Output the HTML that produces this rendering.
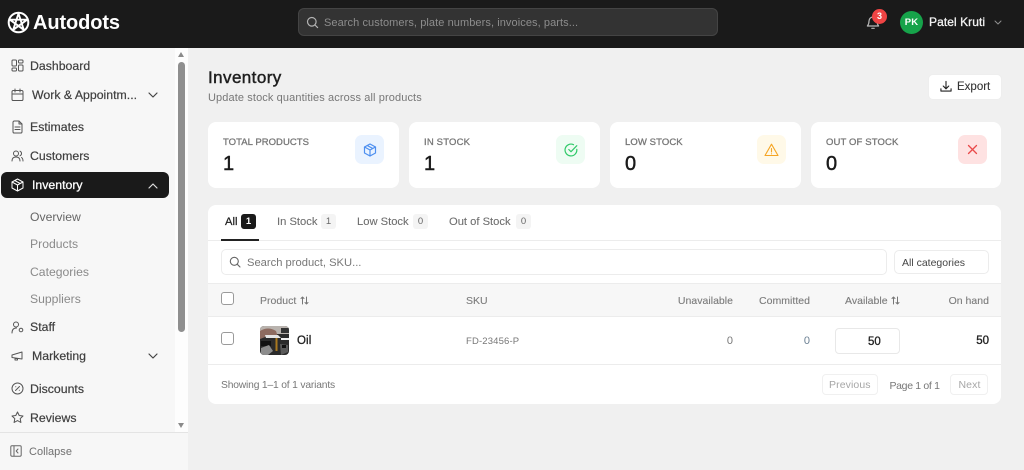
<!DOCTYPE html>
<html><head><meta charset="utf-8"><style>
*{box-sizing:border-box}
html,body{margin:0;padding:0;width:1024px;height:469px;overflow:hidden;background:#f0f0f0;font-family:"Liberation Sans",sans-serif}
.a{position:absolute}
.t{position:absolute;white-space:nowrap;line-height:16px;height:16px}
svg.i{position:absolute;fill:none;stroke:currentColor;stroke-linecap:round;stroke-linejoin:round}
.nav{font-size:12.3px;color:#3f3f3f;letter-spacing:0;-webkit-text-stroke:.2px #3f3f3f}
.sub{font-size:12.2px;color:#8a8a8a;letter-spacing:0}
.card{position:absolute;background:#fff;border-radius:8px;top:122px;height:66px}
.lbl{font-size:9.5px;color:#777;letter-spacing:.12px;font-weight:400;-webkit-text-stroke:.3px #777}
.num{font-size:20px;color:#1a1a1a;-webkit-text-stroke:.45px #1a1a1a;line-height:22px;height:22px}
.ib{position:absolute;width:29px;height:29px;border-radius:7px;top:135px}
.th{font-size:10.5px;color:#7c7c7c;letter-spacing:.02px;-webkit-text-stroke:.12px #7c7c7c}
.tab{font-size:11.2px;color:#6f6f6f;letter-spacing:0;-webkit-text-stroke:.1px #6f6f6f}
.bd{position:absolute;height:15px;width:15px;border-radius:3px;background:#f4f4f4;color:#666;font-size:9.5px;text-align:center;line-height:15px;top:214px}
</style></head><body>

<!-- header -->
<div class="a" style="left:0;top:0;width:1024px;height:47.5px;background:#1a1a1a"></div>
<svg class="i" style="left:7px;top:11px;color:#fff" width="23" height="23" viewBox="0 0 23 23" stroke-width="2"><circle cx="11.5" cy="11.5" r="9.8"/><path d="M11.500 2.500L16.800 18.800L2.900 8.700H20.100L6.200 18.800Z" stroke-width="1.900"/></svg>
<div class="t" style="left:33px;top:11px;font-size:20px;line-height:24px;height:24px;color:#fff;font-weight:700;letter-spacing:-.1px">Autodots</div>

<div class="a" style="left:298px;top:8px;width:420px;height:28px;background:#333;border:1px solid #444;border-radius:6px"></div>
<svg class="i" style="left:306px;top:16px;color:#b4b4b4" width="13" height="13" viewBox="0 0 13 13" stroke-width="1.2"><circle cx="5.8" cy="5.8" r="4.3"/><path d="M9 9L11.6 11.6"/></svg>
<div class="t" style="left:324px;top:15px;font-size:11px;color:#8d8d8d;letter-spacing:.08px">Search customers, plate numbers, invoices, parts...</div>

<svg class="i" style="left:866px;top:15px;color:#b8b8b8" width="14" height="15" viewBox="0 0 14 15" stroke-width="1.2"><path d="M3 6a4 4 0 0 1 8 0c0 3.5 1.4 4.5 1.6 5H1.4C1.6 10.5 3 9.500 3 6Z"/><path d="M5.800 13.300h2.400"/></svg>
<div class="a" style="left:872px;top:9px;width:15px;height:15px;border-radius:50%;background:#ef4444;color:#fff;font-size:9px;font-weight:700;text-align:center;line-height:15px">3</div>
<div class="a" style="left:900px;top:11px;width:23px;height:23px;border-radius:50%;background:#16a34a;color:#fff;font-size:9.5px;font-weight:700;text-align:center;line-height:23px;letter-spacing:.2px">PK</div>
<div class="t" style="left:929px;top:14px;font-size:12px;color:#f3f3f3;font-weight:400;-webkit-text-stroke:.3px #f3f3f3;letter-spacing:.07px">Patel Kruti</div>
<svg class="i" style="left:993.500px;top:19.500px;color:#8f8f8f" width="8" height="5" viewBox="0 0 8 5" stroke-width="1"><path d="M1 1l3 3 3-3"/></svg>

<!-- sidebar -->
<div class="a" style="left:0;top:47.500px;width:188px;height:422px;background:#f7f7f7"></div>
<div class="a" style="left:175px;top:47.500px;width:13px;height:385px;background:#fdfdfd"></div>
<div class="a" style="left:178px;top:62px;width:7px;height:270px;border-radius:3.500px;background:#8f8f8f"></div>
<div class="a" style="left:178px;top:52px;width:0;height:0;border-left:3.500px solid transparent;border-right:3.500px solid transparent;border-bottom:5px solid #8a8a8a"></div>
<div class="a" style="left:178px;top:422.500px;width:0;height:0;border-left:3.500px solid transparent;border-right:3.500px solid transparent;border-top:5px solid #8a8a8a"></div>
<div class="a" style="left:0;top:432px;width:188px;height:1px;background:#e4e4e4"></div>

<svg class="i" style="left:11px;top:59px;color:#555" width="13" height="13" viewBox="0 0 13 13" stroke-width="1"><rect x="1" y="1" width="4.500" height="6" rx="1"/><rect x="7.500" y="1" width="4.500" height="3" rx="1"/><rect x="7.500" y="6" width="4.500" height="6" rx="1"/><rect x="1" y="9" width="4.500" height="3" rx="1"/></svg>
<div class="t nav" style="left:30px;top:58px">Dashboard</div>

<svg class="i" style="left:11px;top:88px;color:#555" width="13" height="14" viewBox="0 0 13 14" stroke-width="1"><rect x="1" y="2.500" width="11" height="10" rx="1.300"/><path d="M1 6h11M4 1v3M9 1v3"/></svg>
<div class="t nav" style="left:32px;top:87px">Work &amp; Appointm...</div>
<svg class="i" style="left:148px;top:92px;color:#444" width="10" height="6" viewBox="0 0 10 6" stroke-width="1.200"><path d="M1 1l4 4 4-4"/></svg>

<svg class="i" style="left:12px;top:120px;color:#555" width="11" height="14" viewBox="0 0 11 14" stroke-width="1"><path d="M7 1H2.300A1.300 1.300 0 0 0 1 2.300v9.400A1.300 1.300 0 0 0 2.300 13h6.400A1.300 1.300 0 0 0 10 11.700V4Z"/><path d="M7 1v3h3M3 7h5M3 9.500h5"/></svg>
<div class="t nav" style="left:30px;top:119px">Estimates</div>

<svg class="i" style="left:11px;top:150px;color:#555" width="13" height="12" viewBox="0 0 13 12" stroke-width="1"><circle cx="5" cy="3.500" r="2.500"/><path d="M1 11c0-3 1.500-4 4-4s4 1 4 4M9 1.200a2.500 2.500 0 0 1 0 4.600M10.500 7.500c1 .6 1.500 1.700 1.500 3.500"/></svg>
<div class="t nav" style="left:30px;top:148px">Customers</div>

<div class="a" style="left:1px;top:172px;width:168px;height:26px;background:#1a1a1a;border-radius:6px"></div>
<svg class="i" style="left:11px;top:178px;color:#fff" width="13" height="14" viewBox="0 0 13 14" stroke-width="1"><path d="M6.500 1L12 4v6l-5.500 3L1 10V4Z"/><path d="M1 4l5.500 3L12 4M6.500 7v6M3.700 2.500l5.500 3"/></svg>
<div class="t nav" style="left:32px;top:177px;color:#fff;-webkit-text-stroke:.3px #fff">Inventory</div>
<svg class="i" style="left:148px;top:183px;color:#ddd" width="10" height="6" viewBox="0 0 10 6" stroke-width="1.200"><path d="M1 5l4-4 4 4"/></svg>

<div class="t sub" style="left:30px;top:209px;color:#666">Overview</div>
<div class="t sub" style="left:30px;top:236px">Products</div>
<div class="t sub" style="left:30px;top:264px">Categories</div>
<div class="t sub" style="left:30px;top:291px">Suppliers</div>

<svg class="i" style="left:11px;top:321px;color:#555" width="13" height="13" viewBox="0 0 13 13" stroke-width="1"><circle cx="5" cy="3.500" r="2.500"/><path d="M1 12c0-3 1.500-5 4.500-5"/><circle cx="10" cy="9" r="1.800"/></svg>
<div class="t nav" style="left:30px;top:319px">Staff</div>

<svg class="i" style="left:11px;top:350px;color:#555" width="13" height="12" viewBox="0 0 13 12" stroke-width="1"><path d="M1 5l10-3v7L1 7.500ZM4 8v2h2.500V8.500"/></svg>
<div class="t nav" style="left:32px;top:348px">Marketing</div>
<svg class="i" style="left:148px;top:353px;color:#444" width="10" height="6" viewBox="0 0 10 6" stroke-width="1.200"><path d="M1 1l4 4 4-4"/></svg>

<svg class="i" style="left:11px;top:382px;color:#555" width="13" height="13" viewBox="0 0 13 13" stroke-width="1"><circle cx="6.500" cy="6.500" r="5.500"/><path d="M4.500 8.500l4-4M4.700 4.700h.1M8.300 8.300h.1"/></svg>
<div class="t nav" style="left:30px;top:381px">Discounts</div>

<svg class="i" style="left:11px;top:411px;color:#555" width="13" height="13" viewBox="0 0 13 13" stroke-width="1"><path d="M6.500 1l1.700 3.500 3.800.5-2.800 2.600.7 3.900-3.400-1.900-3.400 1.900.7-3.900L1 5l3.800-.5Z"/></svg>
<div class="t nav" style="left:30px;top:410px">Reviews</div>

<svg class="i" style="left:10px;top:445px;color:#666" width="12" height="12" viewBox="0 0 12 12" stroke-width="1"><rect x=".8" y=".8" width="10.400" height="10.400" rx="1.200"/><path d="M4 1v10M8 4L6.200 6 8 8"/></svg>
<div class="t" style="left:29px;top:444px;font-size:11px;color:#707070;letter-spacing:.02px">Collapse</div>

<!-- title -->
<div class="t" style="left:208px;top:68px;font-size:17px;line-height:20px;height:20px;color:#1f1f1f;font-weight:400;-webkit-text-stroke:.45px #1f1f1f;letter-spacing:.42px">Inventory</div>
<div class="t" style="left:208px;top:90px;font-size:11px;color:#777;letter-spacing:.11px">Update stock quantities across all products</div>

<div class="a" style="left:928px;top:74px;width:74px;height:26px;background:#fff;border-radius:5px;border:1px solid #eee"></div>
<svg class="i" style="left:940px;top:80px;color:#222" width="12" height="13" viewBox="0 0 13 14" stroke-width="1.200"><path d="M6.500 1.500v7.500M3.500 6.500l3 3 3-3M1 9.500v2.500h11V9.500"/></svg>
<div class="t" style="left:957px;top:79px;font-size:11.500px;color:#333;letter-spacing:0;-webkit-text-stroke:.1px #333">Export</div>

<!-- cards -->
<div class="card" style="left:208px;width:191px"></div>
<div class="card" style="left:409.300px;width:190.700px"></div>
<div class="card" style="left:610.300px;width:190.700px"></div>
<div class="card" style="left:811.300px;width:190px"></div>

<div class="t lbl" style="left:223px;top:135px;letter-spacing:.05px">TOTAL PRODUCTS</div>
<div class="t num" style="left:223px;top:153px">1</div>
<div class="ib" style="left:355px;background:#eaf3ff"></div>
<svg class="i" style="left:362.500px;top:142.500px;color:#4d8ff0" width="14" height="14" viewBox="0 0 14 14" stroke-width="1.200"><path d="M7 1l5.500 3v6L7 13l-5.500-3V4Z"/><path d="M1.500 4L7 7l5.500-3M7 7v6M4.200 2.500L9.800 5.500"/></svg>

<div class="t lbl" style="left:424px;top:135px;letter-spacing:.18px">IN STOCK</div>
<div class="t num" style="left:424px;top:153px">1</div>
<div class="ib" style="left:556px;background:#eefcf3"></div>
<svg class="i" style="left:563.500px;top:142.500px;color:#2fc968" width="14" height="14" viewBox="0 0 14 14" stroke-width="1.200"><path d="M12.800 6.400A5.900 5.900 0 1 1 9.500 1.700"/><path d="M4.800 6.500L7 8.700l5.800-6"/></svg>

<div class="t lbl" style="left:625px;top:135px;letter-spacing:.1px">LOW STOCK</div>
<div class="t num" style="left:625px;top:153px">0</div>
<div class="ib" style="left:757px;background:#fff9e8"></div>
<svg class="i" style="left:764px;top:142.500px;color:#f5a524" width="15" height="14" viewBox="0 0 15 14" stroke-width="1.100"><path d="M7.500 1.200L14 12.500H1Z"/><path d="M7.500 5.500v3.500M7.500 10.800v.1"/></svg>

<div class="t lbl" style="left:826px;top:135px;letter-spacing:.13px">OUT OF STOCK</div>
<div class="t num" style="left:826px;top:153px">0</div>
<div class="ib" style="left:958px;background:#fee2e2"></div>
<svg class="i" style="left:967px;top:144px;color:#ea4a4a" width="11" height="11" viewBox="0 0 11 11" stroke-width="1.300"><path d="M1.500 1.500l8 8M9.500 1.500l-8 8"/></svg>

<!-- table card -->
<div class="a" style="left:208px;top:205px;width:793.300px;height:199px;background:#fff;border-radius:8px;overflow:hidden">
  <div class="a" style="left:0;top:35px;width:794px;height:1px;background:#ececec"></div>
  <div class="a" style="left:13px;top:34px;width:38px;height:1.500px;background:#222"></div>
  <div class="a" style="left:0;top:78px;width:794px;height:34px;background:#f7f7f7;border-top:1px solid #ececec;border-bottom:1px solid #ececec"></div>
  <div class="a" style="left:0;top:159px;width:794px;height:1px;background:#ececec"></div>
</div>

<div class="t tab" style="left:225px;top:213.500px;color:#222;-webkit-text-stroke:.25px #222">All</div>
<div class="a" style="left:241px;top:214px;width:15px;height:15px;border-radius:3px;background:#1a1a1a;color:#fff;font-size:9.500px;font-weight:700;text-align:center;line-height:15px">1</div>
<div class="t tab" style="left:277px;top:213.500px">In Stock</div><div class="bd" style="left:321px">1</div>
<div class="t tab" style="left:357px;top:213.500px">Low Stock</div><div class="bd" style="left:413px">0</div>
<div class="t tab" style="left:449px;top:213.500px">Out of Stock</div><div class="bd" style="left:516px">0</div>

<div class="a" style="left:221px;top:249px;width:666px;height:26px;border:1px solid #ececec;border-radius:5px;background:#fff"></div>
<svg class="i" style="left:229px;top:256px;color:#666" width="12" height="12" viewBox="0 0 12 12" stroke-width="1.100"><circle cx="5.300" cy="5.300" r="4"/><path d="M8.300 8.300L11 11"/></svg>
<div class="t" style="left:247px;top:255px;font-size:11.200px;color:#777">Search product, SKU...</div>
<div class="a" style="left:894px;top:250px;width:95px;height:24px;border:1px solid #ececec;border-radius:5px;background:#fff"></div>
<div class="t" style="left:902px;top:255px;font-size:10.500px;color:#444">All categories</div>

<div class="a" style="left:221px;top:292px;width:13px;height:13px;border:1px solid #9a9a9a;border-radius:3px;background:#fff"></div>
<div class="t th" style="left:260px;top:293px">Product</div>
<svg class="i" style="left:300px;top:295.500px;color:#777" width="9" height="9" viewBox="0 0 9 9" stroke-width="1"><path d="M2.500 8V1M1 2.500L2.500 1 4 2.500M6.500 1v7M5 6.500L6.500 8 8 6.500"/></svg>
<div class="t th" style="left:466px;top:293px">SKU</div>
<div class="t th" style="right:291px;top:293px">Unavailable</div>
<div class="t th" style="right:214px;top:293px">Committed</div>
<div class="t th" style="left:845px;top:293px">Available</div>
<svg class="i" style="left:890.500px;top:295.500px;color:#777" width="9" height="9" viewBox="0 0 9 9" stroke-width="1"><path d="M2.500 8V1M1 2.500L2.500 1 4 2.500M6.500 1v7M5 6.500L6.500 8 8 6.500"/></svg>
<div class="t th" style="right:35px;top:293px">On hand</div>

<div class="a" style="left:221px;top:332px;width:13px;height:13px;border:1px solid #9a9a9a;border-radius:3px;background:#fff"></div>
<svg class="a" style="left:260px;top:326px;border-radius:4px" width="29" height="29" viewBox="0 0 29 29"><rect width="29" height="29" fill="#2b2b2b"/><rect width="29" height="8" fill="#b9b3ae"/><path d="M0 5Q8 0 16 5L18 11 8 10 0 13Z" fill="#8d6b60"/><path d="M5 9h13l3 3H6Z" fill="#e4e4e4"/><rect x="21" y="2" width="8" height="5" fill="#333"/><path d="M21 12h8v2h-8Z" fill="#f1f1f1"/><rect x="15.500" y="12" width="2" height="13" fill="#a9781f"/><rect x="1" y="15" width="10" height="5" fill="#111"/><path d="M1 22l8-3 4 6-5 4H1Z" fill="#8c8c8c"/><path d="M20 18l8 1v7l-7 3Z" fill="#5a5a5a"/><rect x="22" y="19" width="4" height="3" fill="#111"/></svg>
<div class="t" style="left:297px;top:333px;font-size:11.500px;color:#222;-webkit-text-stroke:.3px #222;letter-spacing:.1px">Oil</div>
<div class="t" style="left:466px;top:334px;font-size:9.500px;color:#777;letter-spacing:.15px">FD-23456-P</div>
<div class="t" style="right:291px;top:333px;font-size:11px;color:#777">0</div>
<div class="t" style="right:214px;top:333px;font-size:11px;color:#6a7f92">0</div>
<div class="a" style="left:835px;top:328px;width:65px;height:26px;border:1px solid #e8e8e8;border-radius:4px;background:#fff"></div>
<div class="t" style="left:868px;top:334px;font-size:11.500px;color:#222;-webkit-text-stroke:.3px #222">50</div>
<div class="t" style="right:35px;top:333px;font-size:11.500px;color:#222;-webkit-text-stroke:.35px #222">50</div>

<div class="t" style="left:221px;top:378px;font-size:10.300px;color:#777;letter-spacing:-.18px">Showing 1–1 of 1 variants</div>
<div class="a" style="left:822px;top:374px;width:56px;height:21px;border:1px solid #f0f0f0;border-radius:4px;background:#fff"></div>
<div class="t" style="left:829px;top:376.500px;font-size:10.500px;color:#a6a6a6;letter-spacing:.1px">Previous</div>
<div class="t" style="left:889.500px;top:378px;font-size:10.500px;color:#777;letter-spacing:-.33px">Page 1 of 1</div>
<div class="a" style="left:950px;top:374px;width:38px;height:21px;border:1px solid #f0f0f0;border-radius:4px;background:#fff"></div>
<div class="t" style="left:958.500px;top:376.500px;font-size:10.500px;color:#a6a6a6;letter-spacing:.1px">Next</div>

</body></html>
